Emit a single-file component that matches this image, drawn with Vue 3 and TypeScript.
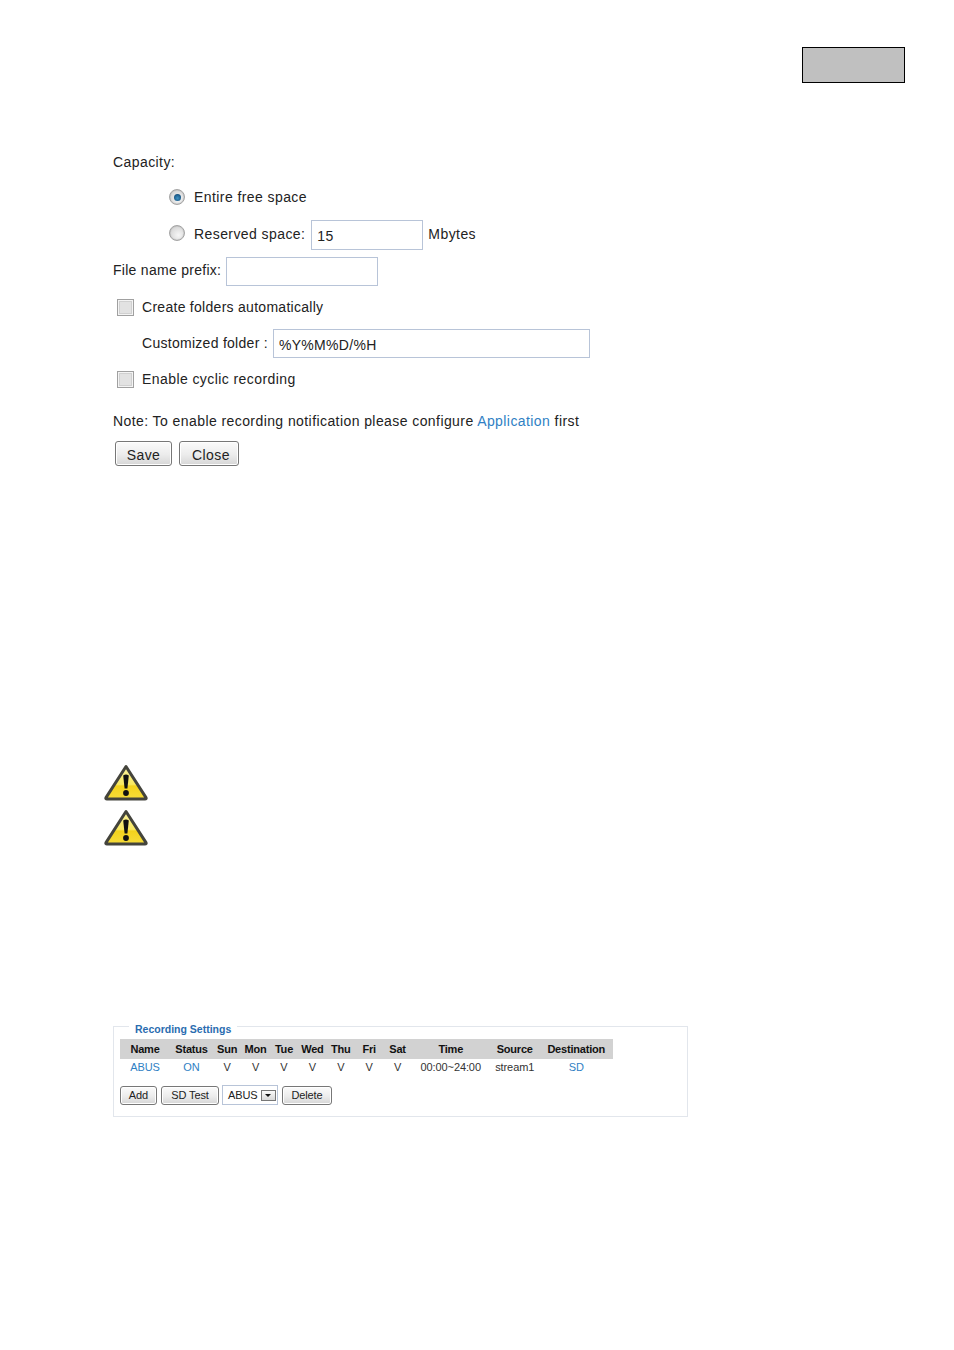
<script setup lang="ts">
const columns = ["Name", "Status", "Sun", "Mon", "Tue", "Wed", "Thu", "Fri", "Sat", "Time", "Source", "Destination"];
const record = [
  { text: "ABUS", link: true },
  { text: "ON", link: true },
  { text: "V" },
  { text: "V" },
  { text: "V" },
  { text: "V" },
  { text: "V" },
  { text: "V" },
  { text: "V" },
  { text: "00:00~24:00" },
  { text: "stream1" },
  { text: "SD", link: true },
];
</script>

<template>
  <div class="page">
    <header class="top">
      <div class="page-box"></div>
    </header>

    <section class="form">
      <div class="row row-first">Capacity:</div>
      <div class="row indent-radio">
        <span class="radio checked"></span>
        <span>Entire free space</span>
      </div>
      <div class="row indent-radio">
        <span class="radio radio-up"></span>
        <span>Reserved space:</span>
        <input class="field field-space" type="text" value="15" />
        <span>Mbytes</span>
      </div>
      <div class="row tight">
        <span>File name prefix:</span>
        <input class="field field-prefix" type="text" />
      </div>
      <div class="row indent-check row-create tight">
        <span class="check"></span>
        <span>Create folders automatically</span>
      </div>
      <div class="row indent-folder tight">
        <span>Customized folder :</span>
        <input class="field field-folder" type="text" value="%Y%M%D/%H" />
      </div>
      <div class="row indent-check">
        <span class="check"></span>
        <span>Enable cyclic recording</span>
      </div>
      <p class="note">Note: To enable recording notification please configure <a class="link">Application</a> first</p>
      <div class="actions">
        <button class="btn btn-save">Save</button>
        <button class="btn btn-close">Close</button>
      </div>
    </section>

    <section class="warnings">
      <svg v-for="n in 2" :key="n" class="warn" viewBox="0 0 44 37" width="44" height="37">
        <defs>
          <linearGradient :id="'warnfill' + n" x1="0" y1="0" x2="0" y2="1">
            <stop offset="0" stop-color="#fbf3a0" />
            <stop offset="0.55" stop-color="#f8e860" />
            <stop offset="0.6" stop-color="#f3d21c" />
            <stop offset="1" stop-color="#f6dc3a" />
          </linearGradient>
        </defs>
        <path d="M22 2.5 L42 33.6 Q42.6 35 41 35 L3 35 Q1.4 35 2 33.6 Z" :fill="'url(#warnfill' + n + ')'" stroke="#44443c" stroke-width="3" stroke-linejoin="round" />
        <path d="M19.2 11.5 Q22 9.6 24.8 11.5 L23.4 24.5 L20.6 24.5 Z" fill="#111" />
        <circle cx="22" cy="29" r="2.9" fill="#111" />
      </svg>
    </section>

    <section class="settings">
      <span class="legend">Recording Settings</span>
      <div class="grid head">
        <span v-for="c in columns" :key="c">{{ c }}</span>
      </div>
      <div class="grid body">
        <span v-for="(cell, i) in record" :key="i" :class="{ link: cell.link }">{{ cell.text }}</span>
      </div>
      <div class="tools">
        <button class="btn small btn-add">Add</button>
        <button class="btn small btn-test">SD Test</button>
        <div class="select">
          <span>ABUS</span>
          <span class="arrow"></span>
        </div>
        <button class="btn small btn-delete">Delete</button>
      </div>
    </section>
  </div>
</template>

<style scoped>
.page {
  width: 954px;
  height: 1350px;
  box-sizing: border-box;
  padding-top: 47px;
  background: #fff;
  color: #222;
  font-family: "Liberation Sans", Arial, sans-serif;
  font-size: 14px;
  letter-spacing: 0.42px;
  overflow: hidden;
}

.top {
  display: flex;
  justify-content: flex-end;
  padding-right: 49px;
}

.page-box {
  width: 103px;
  height: 36px;
  box-sizing: border-box;
  background: #c0c0c0;
  border: 1px solid #000;
}

.form {
  margin: 61px 0 0 113px;
}

.row {
  display: flex;
  align-items: center;
  box-sizing: border-box;
  height: 36.4px;
  white-space: nowrap;
}

.row-first {
  height: 35px;
}

.row-create {
  padding-top: 2px;
}

.tight {
  letter-spacing: 0.28px;
}

.indent-radio {
  padding-left: 56px;
}

.indent-check {
  padding-left: 4px;
}

.indent-folder {
  padding-left: 29px;
}

.radio {
  width: 16px;
  height: 16px;
  box-sizing: border-box;
  margin-right: 9px;
  border-radius: 50%;
  border: 1px solid #a4a4a4;
  background: radial-gradient(circle at 60% 65%, #f6f6f6 0, #dcdcdc 60%, #c4c4c4 100%);
  box-shadow: inset 0 0 1px #888;
  position: relative;
}

.radio-up {
  margin-top: -2px;
}

.radio.checked::after {
  content: "";
  position: absolute;
  left: 3.5px;
  top: 3.5px;
  width: 7px;
  height: 7px;
  border-radius: 50%;
  background: radial-gradient(circle at 50% 60%, #3f93c4 0, #14507e 75%);
}

.check {
  width: 17px;
  height: 17px;
  box-sizing: border-box;
  margin-right: 8px;
  border: 1px solid #a0a0a0;
  background: #e2e2e2;
  box-shadow: inset 0 0 0 1px #f4f4f4, inset 0 0 0 2px #d0d0d0;
}

.field {
  box-sizing: border-box;
  height: 29px;
  padding: 2px 5px 0;
  border: 1px solid #b8c4d8;
  background: #fff;
  color: #222;
  font: inherit;
  letter-spacing: 0.3px;
  outline: none;
}

.field-space {
  width: 112px;
  margin: 2px 5px 0 6px;
  height: 30px;
}

.field-prefix {
  width: 152px;
  margin: 3px 0 0 5px;
}

.field-folder {
  width: 317px;
  margin: 2px 0 0 5px;
}

.note {
  margin: 14px 0 0;
  line-height: 20px;
  white-space: nowrap;
}

.link {
  color: #2f7fc4;
}

.actions {
  display: flex;
  gap: 7px;
  margin: 10px 0 0 2px;
}

.btn {
  box-sizing: border-box;
  height: 25px;
  padding: 2px 0 0;
  border: 1px solid #777;
  border-radius: 3px;
  background: linear-gradient(#fbfbfb, #ececec 55%, #d6d6d6);
  box-shadow: inset 0 0 0 1px #fff;
  color: #222;
  font: inherit;
  letter-spacing: 0.44px;
}

.btn-save {
  width: 57px;
}

.btn-close {
  width: 60px;
  padding-left: 4px;
}

.warnings {
  display: flex;
  flex-direction: column;
  gap: 8px;
  margin: 298px 0 0 104px;
}

.warn {
  display: block;
}

.settings {
  position: relative;
  box-sizing: border-box;
  width: 575px;
  height: 91px;
  margin: 180px 0 0 113px;
  padding: 12px 0 0 6px;
  border: 1px solid #e2e6ec;
  font-size: 11px;
  letter-spacing: -0.1px;
}

.legend {
  position: absolute;
  left: 15px;
  top: -5px;
  padding: 0 6px;
  background: #fff;
  color: #2a6db0;
  font-size: 10.5px;
  font-weight: bold;
  line-height: 14px;
  letter-spacing: 0;
}

.grid {
  display: grid;
  grid-template-columns: 50px 43px repeat(7, 28.4px) 78px 50px 73px;
  width: 493px;
  text-align: center;
  white-space: nowrap;
}

.head {
  height: 20px;
  align-items: center;
  background: #d2d2d2;
  color: #111;
  font-size: 11px;
  font-weight: bold;
  letter-spacing: -0.2px;
}

.body {
  height: 16px;
  align-items: center;
  color: #333;
}

.tools {
  display: flex;
  align-items: center;
  gap: 4px;
  margin-top: 10px;
}

.btn.small {
  height: 19px;
  padding: 0;
  font-size: 11px;
  letter-spacing: -0.1px;
}

.btn-add {
  width: 37px;
}

.btn-test {
  width: 58px;
}

.btn-delete {
  width: 50px;
}

.select {
  display: flex;
  align-items: center;
  gap: 3px;
  box-sizing: border-box;
  width: 56px;
  height: 20px;
  margin-left: -1px;
  padding-left: 5px;
  border: 1px solid #b8c4d8;
}

.arrow {
  position: relative;
  width: 15px;
  height: 11px;
  box-sizing: border-box;
  border: 1px solid #777;
  background: linear-gradient(#fafafa, #d8d8d8);
}

.arrow::after {
  content: "";
  position: absolute;
  left: 3.5px;
  top: 3.5px;
  border-left: 3.5px solid transparent;
  border-right: 3.5px solid transparent;
  border-top: 3.5px solid #111;
}
</style>
